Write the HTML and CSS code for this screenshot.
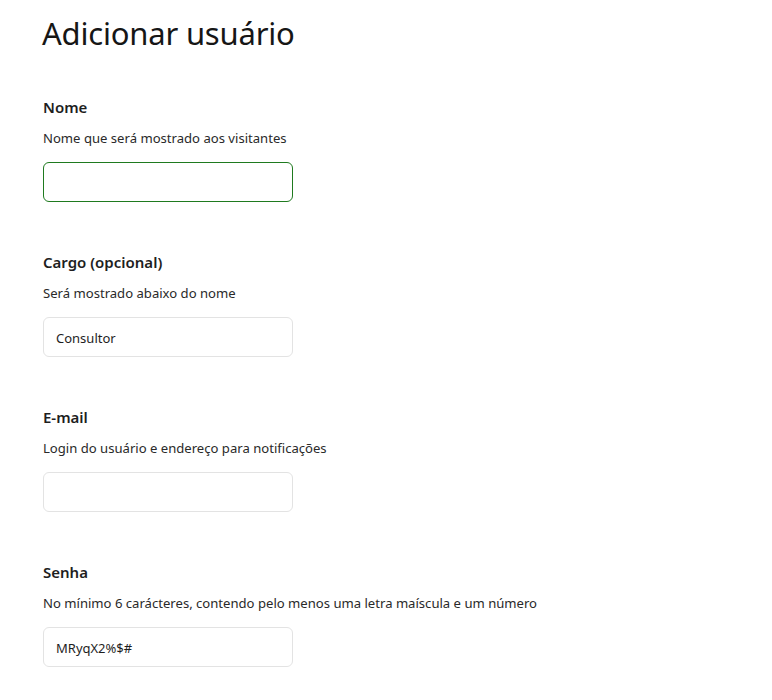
FILE: index.html
```
<!DOCTYPE html>
<html lang="pt-BR">
<head>
<meta charset="utf-8">
<title>Adicionar usuário</title>
<link rel="stylesheet" href="styles.css">
</head>
<body>
<main class="page">
  <h1 class="title">Adicionar usuário</h1>
  <form class="form">
    <div class="field">
      <label class="label" for="nome">Nome</label>
      <p class="help">Nome que será mostrado aos visitantes</p>
      <input class="input input-focus" id="nome" type="text" value="">
    </div>
    <div class="field">
      <label class="label" for="cargo">Cargo (opcional)</label>
      <p class="help">Será mostrado abaixo do nome</p>
      <input class="input" id="cargo" type="text" value="Consultor">
    </div>
    <div class="field">
      <label class="label" for="email">E-mail</label>
      <p class="help">Login do usuário e endereço para notificações</p>
      <input class="input" id="email" type="text" value="">
    </div>
    <div class="field">
      <label class="label" for="senha">Senha</label>
      <p class="help">No mínimo 6 carácteres, contendo pelo menos uma letra maíscula e um número</p>
      <input class="input" id="senha" type="text" value="MRyqX2%$#">
    </div>
  </form>
</main>
</body>
</html>
```
FILE: styles.css
```
* { box-sizing: border-box; }
html, body { margin: 0; padding: 0; background: #ffffff; }
body {
  font-family: "Noto Sans", "Open Sans", sans-serif;
  color: #1b1b1b;
}
.page {
  padding: 13px 0 0 42px;
}
.title {
  margin: 0;
  font-size: 31px;
  line-height: 40px;
  font-weight: 400;
  color: #161616;
  letter-spacing: -0.2px;
}
.form {
  display: flex;
  flex-direction: column;
  gap: 50px;
  margin-top: 44px;
  padding-left: 1px;
}
.field {
  display: flex;
  flex-direction: column;
  align-items: flex-start;
}
.label {
  font-size: 15px;
  line-height: 20px;
  font-weight: 600;
  color: #1e1e1e;
}
.help {
  margin: 11px 0 14px 0;
  font-size: 13.1px;
  line-height: 20px;
  color: #2a2a2a;
}
.input {
  width: 250px;
  height: 40px;
  border: 1px solid #e3e3e3;
  border-radius: 6px;
  padding: 1px 12px 0 12px;
  font-family: inherit;
  font-size: 13px;
  color: #1e1e1e;
  background: #fff;
  outline: none;
}
.input-focus {
  border-color: #1f7a1f;
}
```
